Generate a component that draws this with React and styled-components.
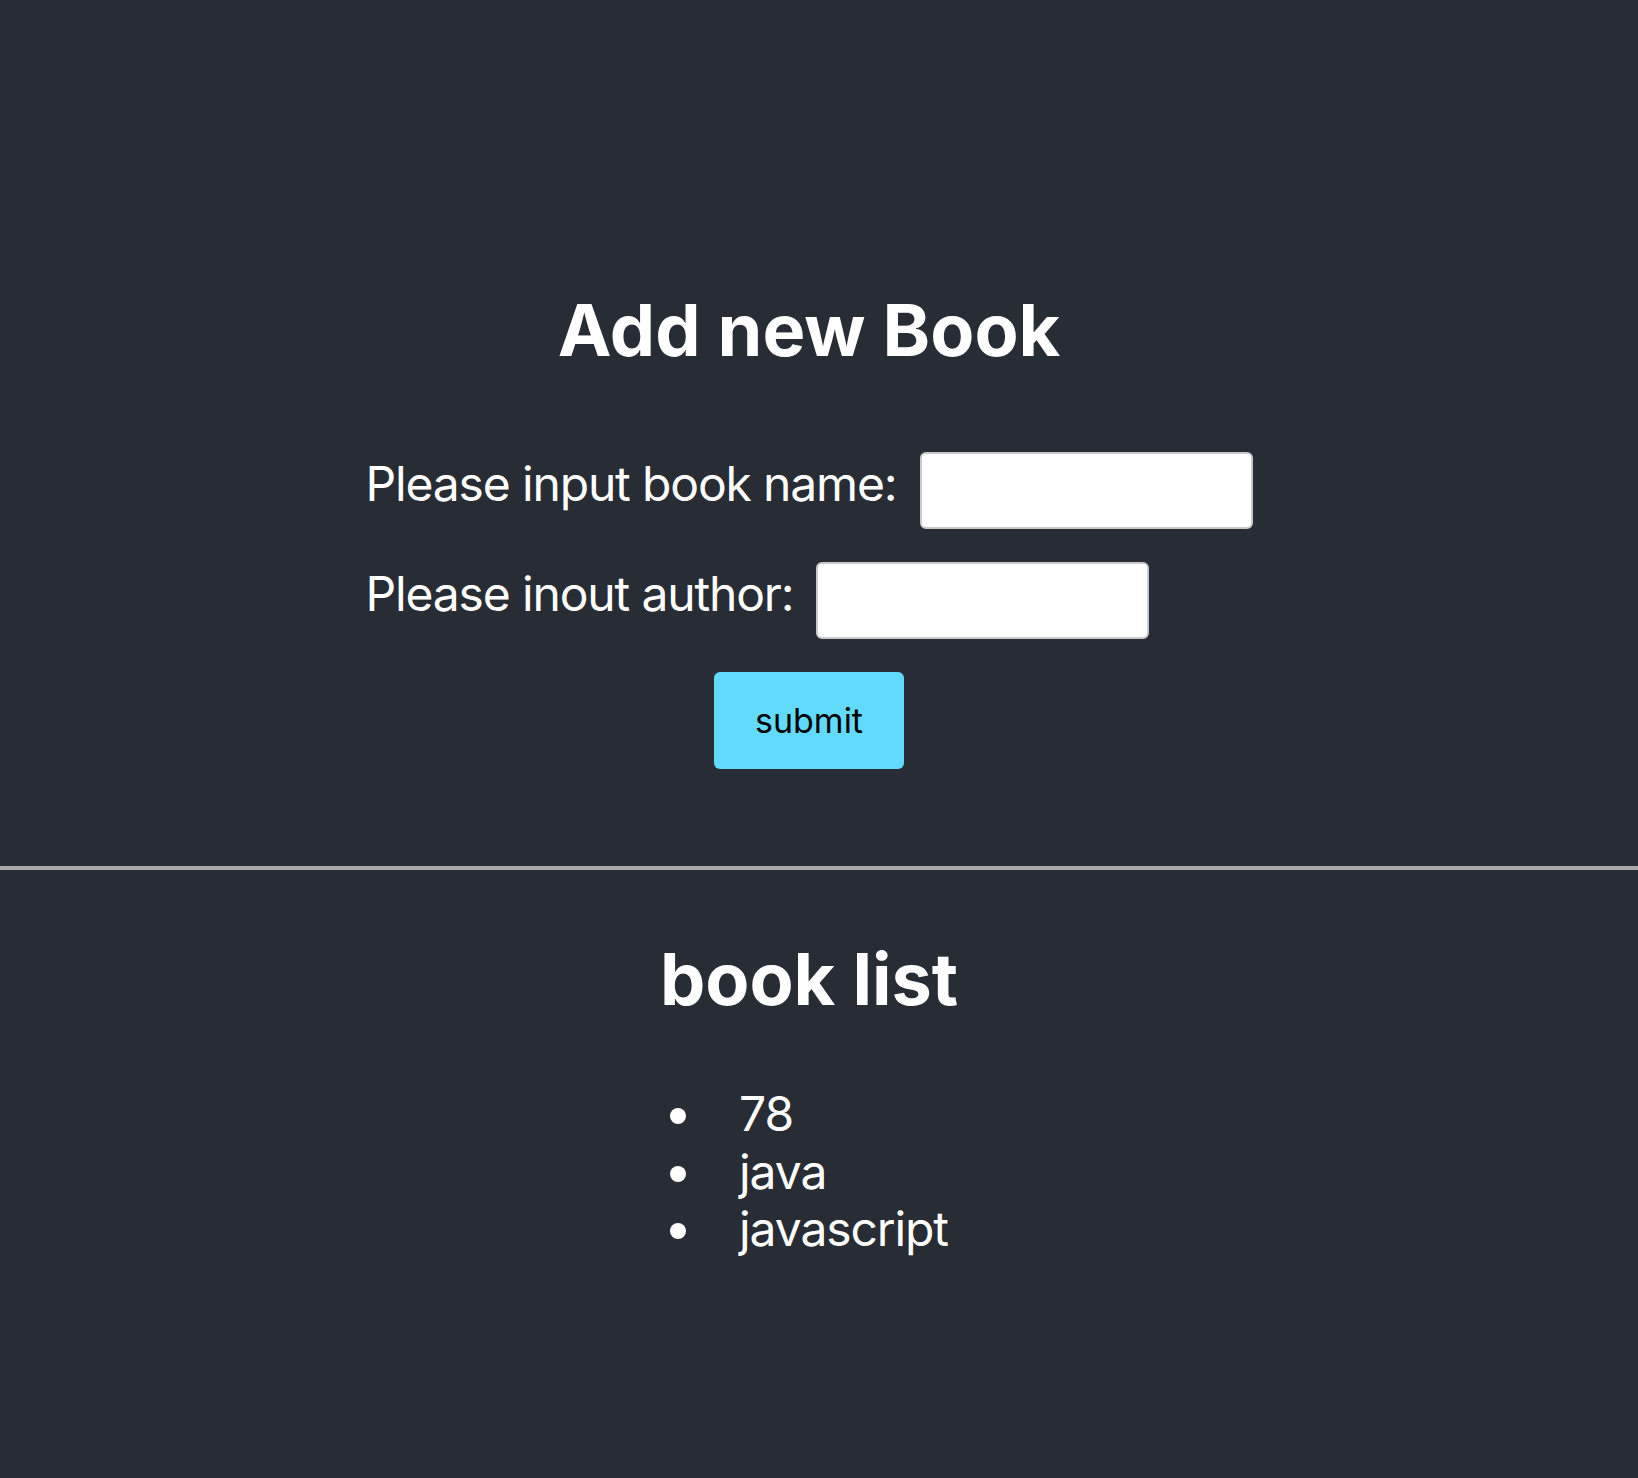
import React from "react";
import styled, { createGlobalStyle } from "styled-components";

const GlobalStyle = createGlobalStyle`
  html, body {
    margin: 0;
    padding: 0;
    background: #282c34;
  }
  body {
    font-family: Inter, "Noto Sans", "Liberation Sans", sans-serif;
  }
  * { box-sizing: border-box; }
`;

const Page = styled.div`
  min-height: 100vh;
  background: #282c34;
  color: #ffffff;
  font-family: Inter, "Noto Sans", "Liberation Sans", sans-serif;
`;

const Section = styled.section`
  display: flex;
  flex-direction: column;
  align-items: center;
  padding-right: 20px;
  padding-top: ${(p) => p.$top}px;
`;

const Title = styled.h2`
  margin: 0;
  font-size: 72px;
  line-height: 88px;
  font-weight: 700;
  color: #ffffff;
  letter-spacing: 0;
`;

const Form = styled.form`
  display: flex;
  flex-direction: column;
  align-items: flex-start;
  gap: 33px;
  margin-top: 78px;
`;

const Row = styled.div`
  display: flex;
  align-items: flex-start;
  gap: 23px;
`;

const Label = styled.label`
  font-size: 48px;
  line-height: 58px;
  margin-top: 2.5px;
  color: #ffffff;
  white-space: nowrap;
  letter-spacing: -1.15px;
`;

const Input = styled.input`
  width: 333px;
  height: 77px;
  background: #ffffff;
  border: 2px solid #c9c9c9;
  border-radius: 6px;
  font-size: 32px;
  font-family: inherit;
  padding: 0 10px;
  outline: none;
`;

const SubmitButton = styled.button`
  align-self: center;
  width: 190px;
  height: 97px;
  background: #61dafb;
  border: none;
  border-radius: 6px;
  color: #000000;
  font-family: Inter, "Noto Sans", "Liberation Sans", sans-serif;
  font-size: 34px;
  cursor: pointer;
`;

const Divider = styled.hr`
  margin: 97px 0 0;
  border: none;
  border-top: 4px solid #a9a9a9;
  height: 0;
`;

const List = styled.ul`
  list-style: none;
  margin: 62px 0 0;
  padding: 0;
  display: flex;
  flex-direction: column;
`;

const Item = styled.li`
  display: flex;
  align-items: center;
  gap: 53px;
  font-size: 48px;
  line-height: 57.6px;
  color: #ffffff;
  letter-spacing: -1.1px;
`;

const Dot = styled.span`
  flex: none;
  width: 16px;
  height: 16px;
  border-radius: 50%;
  background: #ffffff;
  margin-top: 5px;
`;

const books = ["78", "java", "javascript"];

export default function App() {
  return (
    <Page>
      <GlobalStyle />
      <Section $top={286}>
        <Title>Add new Book</Title>
        <Form onSubmit={(e) => e.preventDefault()}>
          <Row>
            <Label htmlFor="bookName">Please input book name:</Label>
            <Input id="bookName" type="text" />
          </Row>
          <Row>
            <Label htmlFor="author">Please inout author:</Label>
            <Input id="author" type="text" />
          </Row>
          <SubmitButton type="submit">submit</SubmitButton>
        </Form>
      </Section>
      <Divider />
      <Section $top={65}>
        <Title>book list</Title>
        <List>
          {books.map((b) => (
            <Item key={b}>
              <Dot />
              {b}
            </Item>
          ))}
        </List>
      </Section>
    </Page>
  );
}
